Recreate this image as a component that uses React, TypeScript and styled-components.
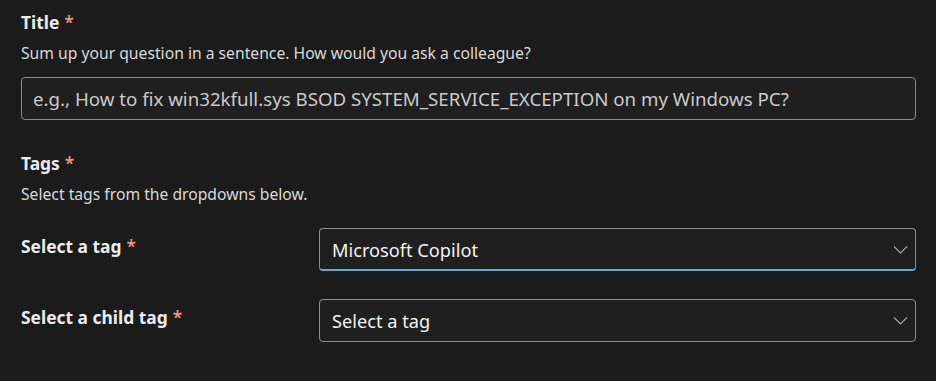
import React from 'react';
import styled, { createGlobalStyle } from 'styled-components';

const GlobalStyle = createGlobalStyle`
  html, body {
    margin: 0;
    padding: 0;
    background: #1b1b1b;
  }
  body {
    font-family: "Noto Sans", "Open Sans", sans-serif;
    color: #e6e6e6;
  }
`;

const Form = styled.form`
  width: 936px;
  height: 381px;
  overflow: hidden;
  padding: 10px 20px 0 21px;
  box-sizing: border-box;
`;

const Section = styled.section<{ $after?: number }>`
  display: flex;
  flex-direction: column;
  margin-bottom: ${(p) => p.$after ?? 31}px;
`;

const Heading = styled.div`
  font-size: 17.4px;
  font-weight: 700;
  line-height: 24px;
  color: #ececec;
`;

const Required = styled.span`
  color: #e8908c;
  font-weight: 600;
  margin-left: 5px;
`;

const Hint = styled.div`
  font-size: 15.7px;
  line-height: 22px;
  color: #d8d8d8;
  margin-top: 8px;
`;

const TextField = styled.input`
  margin-top: 13px;
  height: 43px;
  box-sizing: border-box;
  border: 1px solid #8a8a8a;
  border-radius: 4px;
  background: #1f1f1f;
  padding: 0 11px;
  font-family: inherit;
  font-size: 18.7px;
  color: #e6e6e6;
  outline: none;

  &::placeholder {
    color: #cacaca;
  }
`;

const TagRows = styled.div`
  display: flex;
  flex-direction: column;
  gap: 28px;
  margin-top: 23px;
`;

const TagRow = styled.div`
  display: grid;
  grid-template-columns: 298px 1fr;
  align-items: start;
`;

const RowLabel = styled.label`
  font-size: 17.4px;
  font-weight: 700;
  line-height: 24px;
  color: #ececec;
  padding-top: 6px;
`;

const SelectBox = styled.div<{ $active?: boolean }>`
  display: flex;
  align-items: center;
  justify-content: space-between;
  height: 43px;
  box-sizing: border-box;
  border: 1px solid #8c8c8c;
  border-bottom: ${(p) => (p.$active ? '2px solid #62a9e0' : '1px solid #8c8c8c')};
  border-radius: 4px;
  background: #1f1f1f;
  padding: ${(p) => (p.$active ? '1px 7px 0 12px' : '0 7px 0 12px')};
  font-size: 18.2px;
  color: #f2f2f2;
`;

const Chevron = () => (
  <svg width="15" height="9" viewBox="0 0 15 9" fill="none">
    <path d="M1 1.5l6.5 6.5 6.5-6.5" stroke="#a8a8a8" strokeWidth="1.1" />
  </svg>
);

type SelectProps = {
  value: string;
  active?: boolean;
};

function Select ({ value, active }: SelectProps): React.ReactElement<SelectProps> {
  return (
    <SelectBox $active={active}>
      <span>{value}</span>
      <Chevron />
    </SelectBox>
  );
}

export default function App (): React.ReactElement {
  return (
    <>
      <GlobalStyle />
      <Form>
        <Section>
          <Heading>
            Title<Required>*</Required>
          </Heading>
          <Hint>Sum up your question in a sentence. How would you ask a colleague?</Hint>
          <TextField placeholder="e.g., How to fix win32kfull.sys BSOD SYSTEM_SERVICE_EXCEPTION on my Windows PC?" />
        </Section>
        <Section $after={34}>
          <Heading>
            Tags<Required>*</Required>
          </Heading>
          <Hint>Select tags from the dropdowns below.</Hint>
          <TagRows>
            <TagRow>
              <RowLabel>
                Select a tag<Required>*</Required>
              </RowLabel>
              <Select value="Microsoft Copilot" active />
            </TagRow>
            <TagRow>
              <RowLabel>
                Select a child tag<Required>*</Required>
              </RowLabel>
              <Select value="Select a tag" />
            </TagRow>
          </TagRows>
        </Section>
        <Section>
          <Heading>
            Details<Required>*</Required>
          </Heading>
        </Section>
      </Form>
    </>
  );
}
